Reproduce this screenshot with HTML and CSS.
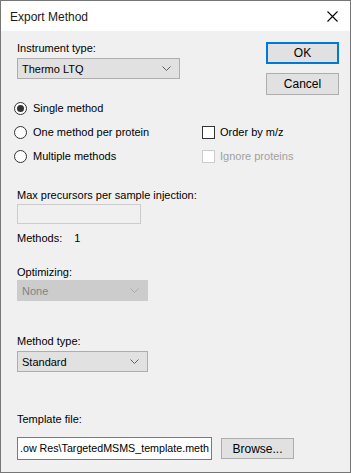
FILE: index.html
```
<!DOCTYPE html>
<html>
  <head>
    <meta charset="utf-8" />
    <title>Export Method</title>
    <link rel="stylesheet" href="styles.css">
  </head>
  <body>
    <div class="window">
      <div class="titlebar">
        <span class="title">Export Method</span>
        <svg class="close" width="11" height="11" viewBox="0 0 11 11">
          <path d="M0.5 0.5 L10.5 10.5 M10.5 0.5 L0.5 10.5" stroke="#000" stroke-width="1.1" fill="none" />
        </svg>
      </div>

      <div class="content">
        <div class="top-row">
          <div class="field">
            <div class="label">Instrument type:</div>
            <div class="combo wide">
              <span>Thermo LTQ</span>
              <svg class="chevron" width="9" height="5" viewBox="0 0 9 5"><path d="M0.5 0.5 L4.5 4.5 L8.5 0.5" /></svg>
            </div>
          </div>
          <div class="buttons">
            <div class="button default">OK</div>
            <div class="button">Cancel</div>
          </div>
        </div>

        <div class="options">
          <div class="radio-col">
            <div class="option"><span class="radio checked"></span>Single method</div>
            <div class="option"><span class="radio"></span>One method per protein</div>
            <div class="option"><span class="radio"></span>Multiple methods</div>
          </div>
          <div class="check-col">
            <div class="option"></div>
            <div class="option"><span class="check"></span>Order by m/z</div>
            <div class="option disabled"><span class="check"></span>Ignore proteins</div>
          </div>
        </div>

        <div class="label max-label">Max precursors per sample injection:</div>
        <div class="textbox disabled-box"></div>

        <div class="methods"><span>Methods:</span><span class="count">1</span></div>

        <div class="label opt-label">Optimizing:</div>
        <div class="combo narrow disabled-combo">
          <span>None</span>
          <svg class="chevron" width="9" height="5" viewBox="0 0 9 5"><path d="M0.5 0.5 L4.5 4.5 L8.5 0.5" /></svg>
        </div>

        <div class="label type-label">Method type:</div>
        <div class="combo narrow">
          <span>Standard</span>
          <svg class="chevron" width="9" height="5" viewBox="0 0 9 5"><path d="M0.5 0.5 L4.5 4.5 L8.5 0.5" /></svg>
        </div>

        <div class="label template-label">Template file:</div>
        <div class="template-row">
          <div class="textbox file-box">.ow Res\TargetedMSMS_template.meth</div>
          <div class="button browse">Browse...</div>
        </div>
      </div>
    </div>
  </body>
</html>
```

FILE: styles.css
```
body {
  margin: 0;
  padding: 0;
  background: #f0f0f0;
  font-family: "Liberation Sans", Arial, sans-serif;
  font-size: 11px;
  color: #000;
}

.window {
  width: 351px;
  height: 473px;
  box-sizing: border-box;
  border: 1px solid #767676;
  background: #f0f0f0;
}

.titlebar {
  height: 30px;
  background: #fff;
  display: flex;
  align-items: center;
  justify-content: space-between;
  padding: 0 12px 0 9px;
}

.title {
  font-size: 12px;
  color: #1a1a1a;
  padding-top: 1px;
}

.close {
  display: block;
  margin-top: 1px;
}

.content {
  padding: 11px 11px 0 16px;
}

.label {
  line-height: 13px;
  height: 13px;
}

.top-row {
  display: flex;
  justify-content: space-between;
}

.field .label {
  margin-bottom: 3px;
}

.combo {
  height: 21px;
  box-sizing: border-box;
  border: 1px solid #adadad;
  background: #e1e1e1;
  display: flex;
  align-items: center;
  justify-content: space-between;
  padding: 0 8px 0 4px;
}

.combo.wide {
  width: 163px;
}

.combo.narrow {
  width: 131px;
}

.chevron path {
  fill: none;
  stroke: #606060;
  stroke-width: 1;
}

.disabled-combo {
  background: #cccccc;
  border-color: #cccccc;
  color: #838383;
}

.disabled-combo .chevron path {
  stroke: #a8a8a8;
}

.buttons {
  display: flex;
  flex-direction: column;
  gap: 9px;
}

.button {
  width: 73px;
  height: 22px;
  box-sizing: border-box;
  border: 1px solid #adadad;
  background: #e1e1e1;
  display: flex;
  align-items: center;
  justify-content: center;
  font-size: 12px;
}

.button.default {
  border: 2px solid #0078d7;
}

.options {
  display: flex;
  margin-top: 1px;
  margin-left: -3px;
}

.radio-col {
  width: 188px;
}

.option {
  height: 24px;
  display: flex;
  align-items: center;
}

.radio {
  width: 13px;
  height: 13px;
  box-sizing: border-box;
  border: 1px solid #333;
  border-radius: 50%;
  background: #fff;
  margin-right: 6px;
  display: flex;
  align-items: center;
  justify-content: center;
}

.radio.checked::after {
  content: "";
  width: 7px;
  height: 7px;
  border-radius: 50%;
  background: #333;
}

.check {
  width: 13px;
  height: 13px;
  box-sizing: border-box;
  border: 1px solid #333;
  background: #fff;
  margin-right: 5px;
}

.option.disabled {
  color: #a0a0a0;
}

.option.disabled .check {
  border-color: #cccccc;
}

.max-label {
  margin-top: 21px;
}

.textbox {
  box-sizing: border-box;
}

.disabled-box {
  width: 124px;
  height: 20px;
  margin-top: 2px;
  border: 1px solid #cccccc;
  background: #f0f0f0;
}

.methods {
  margin-top: 8px;
  height: 13px;
  line-height: 13px;
  display: flex;
}

.methods .count {
  margin-left: 12px;
}

.opt-label {
  margin-top: 21px;
}

.opt-label + .combo {
  margin-top: 1px;
}

.type-label {
  margin-top: 34px;
}

.type-label + .combo {
  margin-top: 3px;
}

.template-label {
  margin-top: 41px;
}

.template-row {
  display: flex;
  align-items: center;
  gap: 9px;
  margin-top: 11px;
}

.file-box {
  width: 195px;
  height: 23px;
  border: 1px solid #7a7a7a;
  background: #fff;
  padding: 0 1px 0 2px;
  line-height: 21px;
  font-size: 10.7px;
  white-space: nowrap;
  overflow: hidden;
}

.button.browse {
  height: 21px;
}
```
